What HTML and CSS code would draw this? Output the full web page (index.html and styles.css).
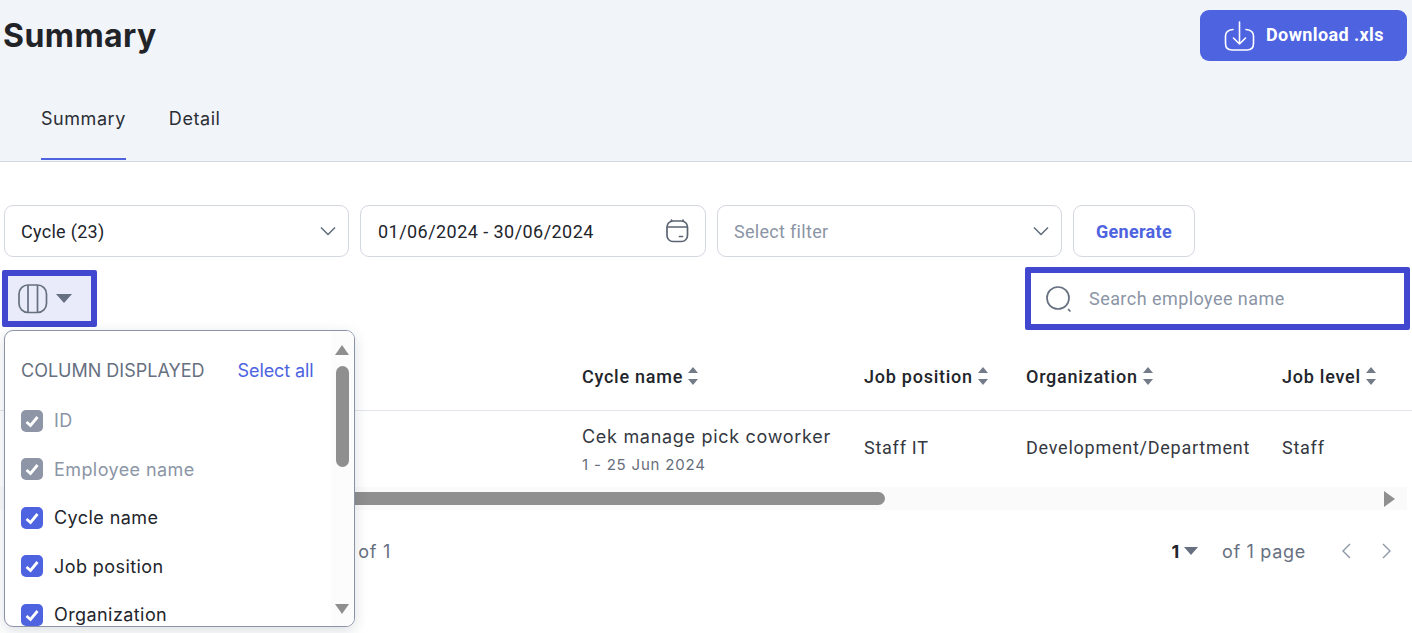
FILE: index.html
```html
<!DOCTYPE html>
<html lang="en">
<head>
<meta charset="utf-8">
<title>Summary</title>
<link rel="stylesheet" href="styles.css">
</head>
<body>
<header class="head">
  <div class="head-top">
    <h1 class="title">Summary</h1>
    <button class="download">
      <svg class="dl-icon" width="32" height="32" viewBox="0 0 32 32" fill="none" stroke="currentColor" stroke-width="1.6" stroke-linecap="round" stroke-linejoin="round"><path d="M9 9.500C4 10 1.500 12 1.500 16v7.500c0 4 2.500 6.500 6.500 6.500h15c4 0 6.500-2.500 6.500-6.500V16c0-4-2.500-6-7.500-6.500"/><path d="M15.500 2v22M9.500 18l6 6 6-6"/></svg>
      <span>Download .xls</span>
    </button>
  </div>
  <nav class="tabs">
    <a class="tab active">Summary</a>
    <a class="tab">Detail</a>
  </nav>
</header>
<main class="content">
  <div class="filters">
    <div class="field w1"><span>Cycle (23)</span><svg class="chev" width="16" height="10" viewBox="0 0 16 10" fill="none" stroke="#5f6b7a" stroke-width="1.500"><path d="M1 1.500l7 7 7-7"/></svg></div>
    <div class="field w2"><span class="date">01/06/2024 - 30/06/2024</span><svg width="24" height="24" viewBox="0 0 24 24" fill="none" stroke="#5b6472" stroke-width="1.700" stroke-linecap="round"><rect x="2" y="2" width="20.500" height="20.500" rx="6"/><path d="M3 8h18.500M6.500 1v1M18 1v1M14.500 17.500h3"/></svg></div>
    <div class="field w3 muted"><span>Select filter</span><svg class="chev" width="16" height="10" viewBox="0 0 16 10" fill="none" stroke="#5f6b7a" stroke-width="1.500"><path d="M1 1.500l7 7 7-7"/></svg></div>
    <button class="generate">Generate</button>
  </div>
  <div class="tools">
    <button class="columns">
      <svg width="30" height="30" viewBox="0 0 30 30" fill="none" stroke="#667080" stroke-width="1.700"><rect x="1" y="1" width="27.500" height="27.500" rx="9"/><path d="M10 1v27.500M19.500 1v27.500"/></svg>
      <i class="caret big"></i>
    </button>
    <div class="search">
      <svg width="28" height="28" viewBox="0 0 28 28" fill="none" stroke="#667080" stroke-width="1.700" stroke-linecap="round"><circle cx="13" cy="13" r="11"/><path d="M23.500 24.500l1.500 1.500"/></svg>
      <span>Search employee name</span>
    </div>
  </div>
  <section class="table">
    <div class="thead">
      <div class="c0"></div>
      <div class="c1 th">Cycle name<i class="sort"></i></div>
      <div class="c2 th">Job position<i class="sort"></i></div>
      <div class="c3 th">Organization<i class="sort"></i></div>
      <div class="c4 th">Job level<i class="sort"></i></div>
    </div>
    <div class="trow">
      <div class="c0"></div>
      <div class="c1"><div class="cycle">Cek manage pick coworker</div><div class="sub">1 - 25 Jun 2024</div></div>
      <div class="c2">Staff IT</div>
      <div class="c3">Development/Department</div>
      <div class="c4">Staff</div>
    </div>
    <div class="hscroll"><div class="hthumb"></div><i class="harrow"></i></div>
  </section>
  <footer class="pager">
    <span class="range">1 - 1 of 1</span>
    <div class="pages">
      <b class="cur">1</b><i class="caret"></i>
      <span class="of">of 1 page</span>
      <svg class="nav" width="12" height="16" viewBox="0 0 12 16" fill="none" stroke="#8e97a6" stroke-width="1.400"><path d="M10 1L3 8l7 7"/></svg>
      <svg class="nav" width="12" height="16" viewBox="0 0 12 16" fill="none" stroke="#8e97a6" stroke-width="1.400"><path d="M2 1l7 7-7 7"/></svg>
    </div>
  </footer>
  <aside class="menu">
    <div class="menu-head"><span class="menu-title">COLUMN DISPLAYED</span><a class="all">Select all</a></div>
    <label class="opt off"><i class="box"><svg width="20" height="20" viewBox="0 0 20 20" fill="none" stroke="#fff" stroke-width="2.800"><path d="M4.500 11l4 3.500 7-8.500"/></svg></i>ID</label>
    <label class="opt off"><i class="box"><svg width="20" height="20" viewBox="0 0 20 20" fill="none" stroke="#fff" stroke-width="2.800"><path d="M4.500 11l4 3.500 7-8.500"/></svg></i>Employee name</label>
    <label class="opt"><i class="box"><svg width="20" height="20" viewBox="0 0 20 20" fill="none" stroke="#fff" stroke-width="2.800"><path d="M4.500 11l4 3.500 7-8.500"/></svg></i>Cycle name</label>
    <label class="opt"><i class="box"><svg width="20" height="20" viewBox="0 0 20 20" fill="none" stroke="#fff" stroke-width="2.800"><path d="M4.500 11l4 3.500 7-8.500"/></svg></i>Job position</label>
    <label class="opt"><i class="box"><svg width="20" height="20" viewBox="0 0 20 20" fill="none" stroke="#fff" stroke-width="2.800"><path d="M4.500 11l4 3.500 7-8.500"/></svg></i>Organization</label>
    <div class="vscroll"><i class="up"></i><i class="vthumb"></i><i class="down"></i></div>
  </aside>
</main>
</body>
</html>
```
FILE: styles.css
```css
* { box-sizing: border-box; }
html, body { margin: 0; height: 633px; overflow: hidden; background: #fff; }
body { font-family: Roboto, "Liberation Sans", sans-serif; color: #22252b; font-size: 18px; letter-spacing: .3px; }
i { display: block; font-style: normal; }
.head { height: 162px; background: #f1f4f9; border-bottom: 1px solid #d5d9e2; padding: 10px 5px 0 3px; }
.head-top { display: flex; justify-content: space-between; align-items: flex-start; height: 79px; }
.title { margin: 7px 0 0; font-family: Inter, sans-serif; font-size: 32px; line-height: 38px; font-weight: 700; color: #212328; letter-spacing: .45px; }
.download { width: 207px; height: 51px; border: 0; border-radius: 9px; background: #4d63e0; color: #fff; display: flex; align-items: center; gap: 10px; padding: 0 0 2px 24px; font: 700 18px Roboto, sans-serif; letter-spacing: .4px; }
.dl-icon { margin-top: 2px; }
.tabs { display: flex; gap: 43px; padding-left: 38px; height: 72px; font-family: Inter, sans-serif; letter-spacing: .55px; }
.tab { height: 71px; display: flex; align-items: center; color: #2b2e35; font-size: 18px; padding-bottom: 13px; }
.tab.active { border-bottom: 2px solid #4d63e0; padding-bottom: 11px; }
.content { position: relative; padding: 43px 2px 0 4px; }
.filters { display: flex; gap: 11px; }
.field { height: 52px; border: 1px solid #d3d7e0; border-radius: 9px; display: flex; align-items: center; justify-content: space-between; padding: 0 12px 0 16px; background: #fff; }
.w1 { width: 345px; }
.w2 { width: 346px; padding: 0 16px 0 17px; }
.w3 { width: 345px; }
.date { letter-spacing: .45px; }
.muted { color: #8b95a5; }
.generate { width: 122px; height: 52px; border: 1px solid #d3d7e0; border-radius: 9px; background: #fff; color: #4d63e0; font: 700 18px Roboto, sans-serif; letter-spacing: .3px; }
.tools { display: flex; justify-content: space-between; align-items: flex-start; height: 81px; margin: 10px 0 0 -2px; }
.columns { width: 95px; height: 57px; margin-top: 3px; border: 6px solid #4147cf; border-radius: 2px; background: #e9ebfa; display: flex; align-items: center; gap: 8px; padding: 0 0 0 10px; }
.caret { width: 0; height: 0; border: 7px solid transparent; border-top: 8px solid #667080; border-bottom: 0; }
.caret.big { border-width: 9px 8.500px 0; border-top-color: #667080; border-bottom: 0; }
.search { width: 385px; height: 63px; border: 6px solid #4147cf; border-radius: 2px; display: flex; align-items: center; gap: 16px; padding-left: 14px; color: #8b95a5; letter-spacing: .45px; }
.table { margin: 0 -2px 0 -4px; }
.thead, .trow { display: grid; grid-template-columns: 582px 282px 162px 256px 130px; align-items: center; letter-spacing: .75px; }
.thead { height: 63px; border-bottom: 1px solid #e2e5eb; padding-bottom: 6px; }
.th { display: flex; align-items: center; gap: 5px; font-weight: 500; }
.sort { width: 10px; height: 20px; position: relative; }
.sort::before, .sort::after { content: ""; position: absolute; left: 0; border-left: 5px solid transparent; border-right: 5px solid transparent; }
.sort::before { top: 1px; border-bottom: 6px solid #737b88; }
.sort::after { bottom: 1px; border-top: 6px solid #737b88; }
.trow { height: 76px; padding-bottom: 4px; color: #343841; }
.cycle { font-family: Inter, sans-serif; font-size: 18px; letter-spacing: .7px; line-height: 24px; margin-top: 5px; }
.sub { font-family: Inter, sans-serif; font-size: 15px; color: #676e7b; margin-top: 6px; letter-spacing: .8px; line-height: 20px; }
.hscroll { height: 23px; background: #fafafa; position: relative; width: 1407px; }
.hthumb { position: absolute; left: 300px; top: 5px; width: 585px; height: 13px; border-radius: 7px; background: #8f8f8f; }
.harrow { position: absolute; right: 12px; top: 4px; border-left: 11px solid #8f8f8f; border-top: 8px solid transparent; border-bottom: 8px solid transparent; }
.pager { display: flex; justify-content: space-between; align-items: center; height: 82px; padding: 0 17px 0 312px; color: #667080; font-family: Inter, sans-serif; letter-spacing: .7px; }
.range { color: #667080; }
.pages { display: flex; align-items: center; }
.cur { color: #22252b; font-weight: 700; margin-right: 4px; }
.of { margin: 0 34px 0 24px; }
.nav + .nav { margin-left: 29px; }
.menu { position: absolute; left: 4px; top: 168px; width: 351px; height: 297px; background: #fff; border: 1px solid #8a93a8; border-radius: 9px; box-shadow: 0 4px 14px rgba(30,40,60,.15); overflow: hidden; padding: 0 0 0 16px; font-family: Inter, sans-serif; letter-spacing: 0; }
.menu-head { display: flex; align-items: center; gap: 33px; margin: 26px 0 13.400px; height: 26px; }
.menu-title { color: #667080; }
.all { color: #4d63e0; letter-spacing: -.1px; }
.opt { display: flex; align-items: center; gap: 11px; height: 48.500px; color: #22252b; letter-spacing: .42px; }
.opt.off { color: #8b95a5; }
.box { width: 22px; height: 22px; border-radius: 5px; background: #4d63e0; display: flex; align-items: center; justify-content: center; flex: none; }
.off .box { background: #8d95a6; }
.vscroll { position: absolute; right: 0; top: 0; bottom: 0; width: 23px; background: #fcfcfc; }
.up { position: absolute; left: 4px; top: 14px; border-left: 7.500px solid transparent; border-right: 7.500px solid transparent; border-bottom: 10px solid #8f8f8f; }
.down { position: absolute; left: 4px; bottom: 12px; border-left: 7.500px solid transparent; border-right: 7.500px solid transparent; border-top: 10px solid #8f8f8f; }
.vthumb { position: absolute; left: 5px; top: 35px; width: 13px; height: 101px; border-radius: 7px; background: #8f8f8f; }
```
